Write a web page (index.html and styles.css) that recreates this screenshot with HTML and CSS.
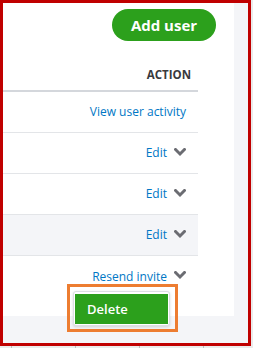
FILE: index.html
```html
<!DOCTYPE html>
<html>
<head>
<meta charset="utf-8">
<link rel="stylesheet" href="styles.css">
</head>
<body>
<div class="sheet">
  <div class="frame">
    <div class="panel">
      <div class="top">
        <button class="add-btn">Add user</button>
      </div>
      <div class="table">
        <div class="thead">ACTION</div>
        <div class="row"><a class="link">View user activity</a></div>
        <div class="row"><a class="link">Edit</a><svg class="chev" viewBox="0 0 12 9" width="12" height="9"><path d="M1.5 1.5 L6 6 L10.5 1.5" fill="none" stroke="#6b6c72" stroke-width="3" stroke-linecap="square"/></svg></div>
        <div class="row"><a class="link">Edit</a><svg class="chev" viewBox="0 0 12 9" width="12" height="9"><path d="M1.5 1.5 L6 6 L10.5 1.5" fill="none" stroke="#6b6c72" stroke-width="3" stroke-linecap="square"/></svg></div>
        <div class="row alt"><a class="link">Edit</a><svg class="chev" viewBox="0 0 12 9" width="12" height="9"><path d="M1.5 1.5 L6 6 L10.5 1.5" fill="none" stroke="#6b6c72" stroke-width="3" stroke-linecap="square"/></svg></div>
        <div class="row last"><a class="link">Resend invite</a><svg class="chev" viewBox="0 0 12 9" width="12" height="9"><path d="M1.5 1.5 L6 6 L10.5 1.5" fill="none" stroke="#6b6c72" stroke-width="3" stroke-linecap="square"/></svg></div>
      </div>
    </div>
    <div class="highlight">
      <div class="menu">
        <div class="menu-item">Delete</div>
      </div>
    </div>
  </div>
</div>
</body>
</html>
```
FILE: styles.css
```css
html, body {
  margin: 0;
  padding: 0;
}
body {
  width: 253px;
  height: 348px;
  overflow: hidden;
  background-color: #ebebeb;
  background-image: linear-gradient(to right, #bdbdbd 1px, transparent 1px);
  background-size: 64px 100%;
  background-position: 11px 0;
  font-family: "Open Sans", "Liberation Sans", sans-serif;
}
.sheet {
  width: 253px;
  height: 348px;
}
.frame {
  position: relative;
  box-sizing: border-box;
  width: 251px;
  height: 346px;
  border: 3px solid #c00000;
  background: #f4f5f8;
}
.panel {
  width: 231px;
  height: 313px;
  background: #ffffff;
}
.top {
  display: flex;
  justify-content: flex-end;
  padding: 6px 18px 0 0;
}
.add-btn {
  width: 104px;
  height: 32px;
  border: none;
  border-radius: 16px;
  background: #2ca01c;
  color: #ffffff;
  font-family: "Open Sans", "Liberation Sans", sans-serif;
  font-size: 15px;
  font-weight: 700;
  padding: 0;
}
.table {
  width: 195px;
}
.thead {
  height: 51px;
  box-sizing: border-box;
  display: flex;
  align-items: flex-end;
  justify-content: flex-end;
  padding: 0 7px 7px 0;
  border-bottom: 2px solid #d4d7dc;
  color: #393a3d;
  font-size: 11.5px;
  font-weight: 700;
  line-height: 16px;
}
.row {
  height: 41px;
  box-sizing: border-box;
  display: flex;
  align-items: center;
  justify-content: flex-end;
  gap: 7px;
  padding-right: 12px;
  border-bottom: 1px solid #e3e5e8;
}
.row:first-of-type {
  height: 40px;
}
.row.alt {
  background: #f4f5f8;
}
.row.last {
  border-bottom: none;
}
.link {
  color: #0077c5;
  font-size: 12px;
  line-height: 16px;
}
.chev {
  display: block;
  margin-top: -2px;
}
.highlight {
  position: absolute;
  left: 64px;
  top: 281px;
  width: 111px;
  height: 48px;
  box-sizing: border-box;
  border: 3px solid #ed7d31;
  padding: 4px 5px 0 3px;
}
.menu {
  box-sizing: border-box;
  width: 97px;
  height: 35px;
  background: #ffffff;
  border: 1px solid #dcdfe3;
  border-radius: 3px;
  box-shadow: 0 1px 3px rgba(0,0,0,0.15);
  padding: 2px 1px;
}
.menu-item {
  height: 30px;
  background: #2ca01c;
  color: #ffffff;
  font-size: 13px;
  font-weight: 600;
  line-height: 30px;
  padding-left: 12px;
}
```
